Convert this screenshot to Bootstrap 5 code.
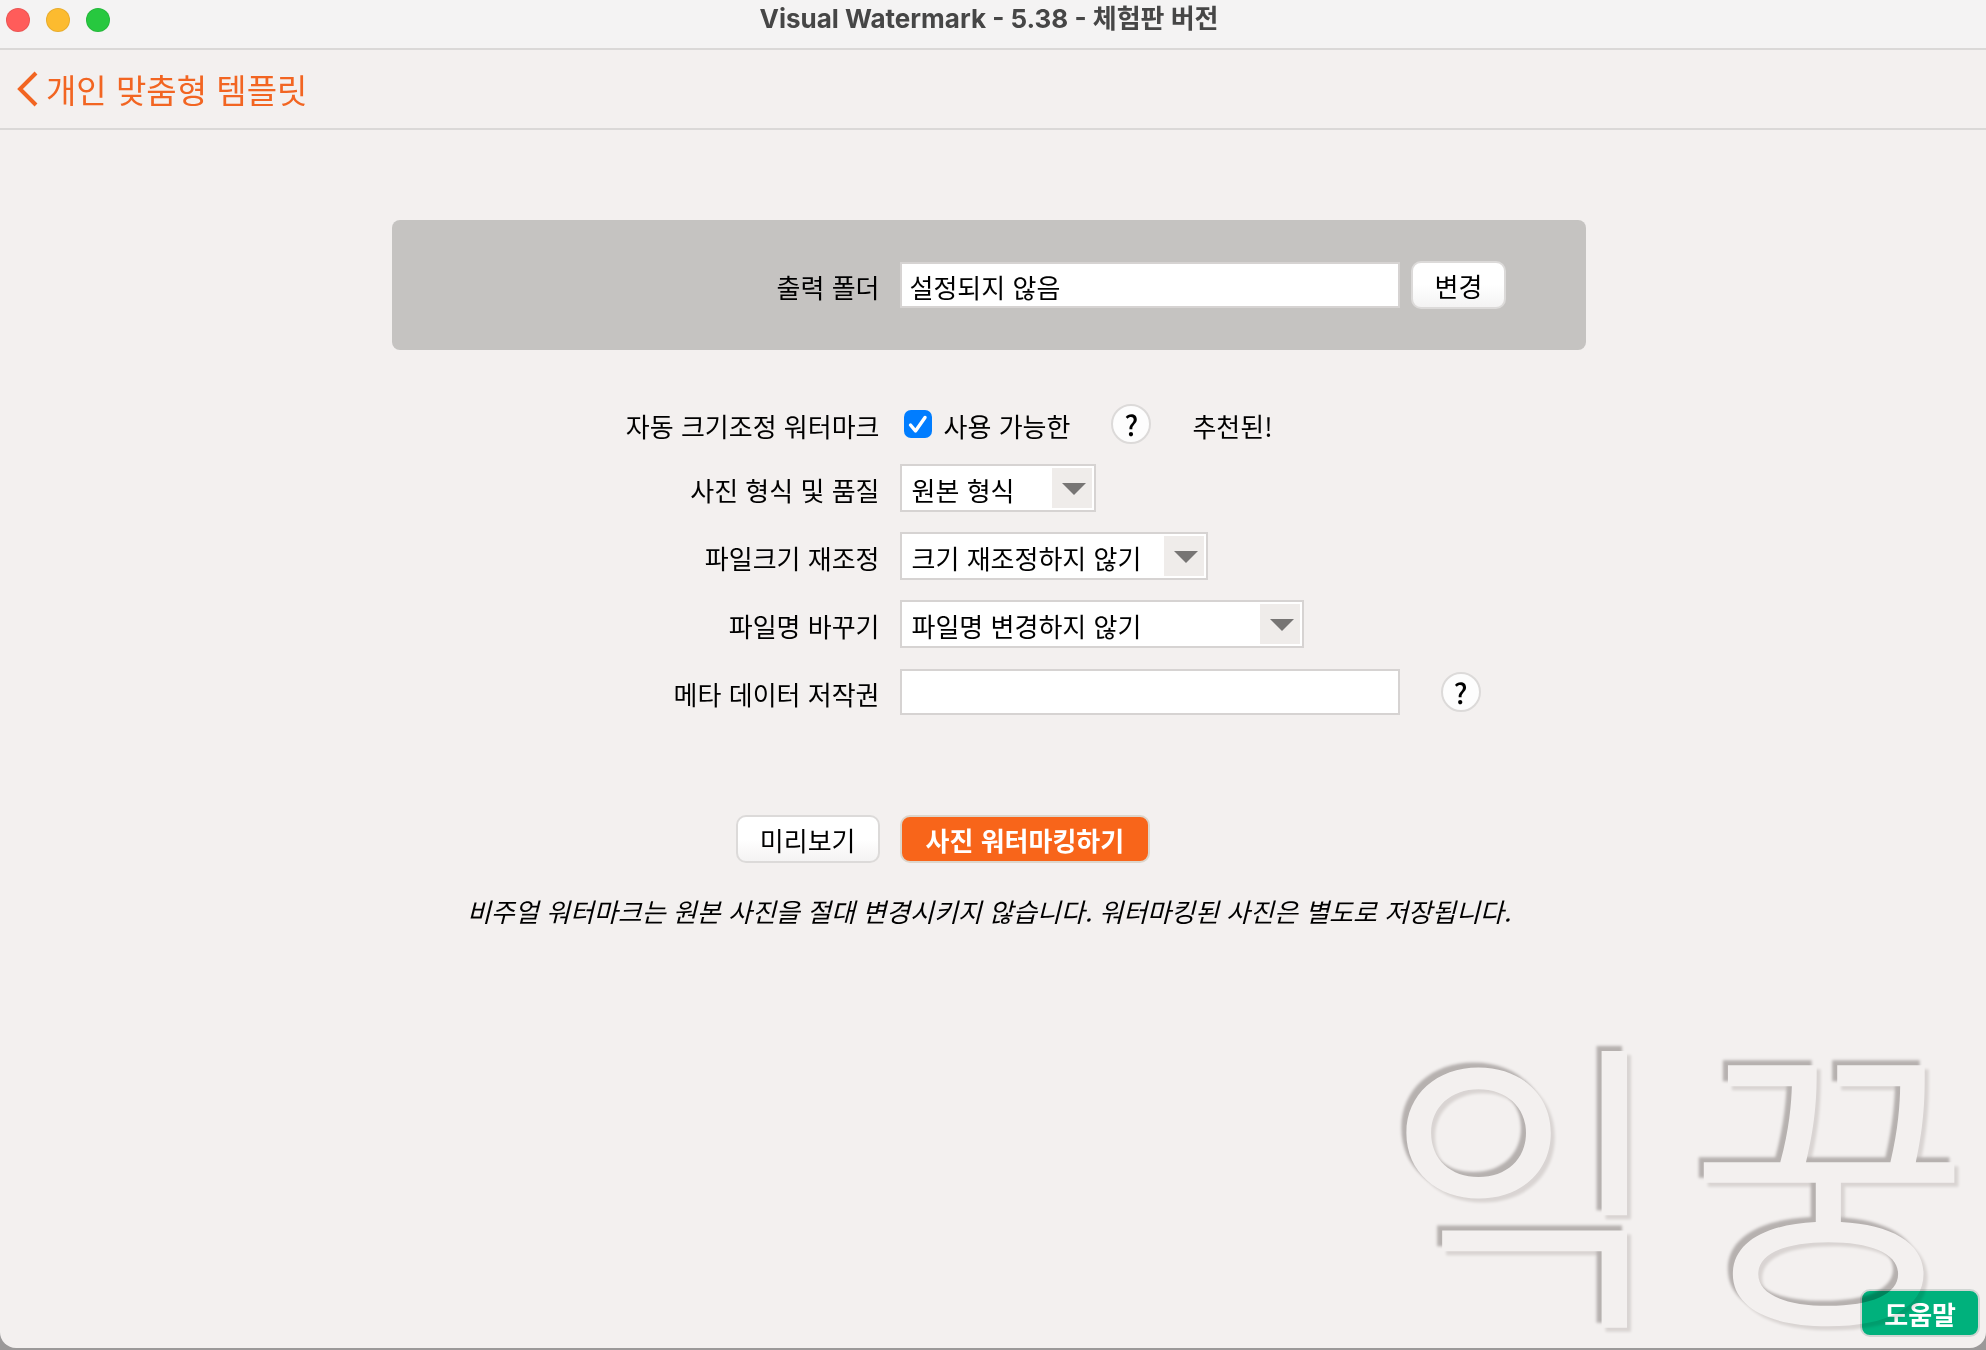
<!DOCTYPE html>
<html lang="ko">
<head>
<meta charset="utf-8">
<meta name="viewport" content="width=device-width, initial-scale=1">
<title>Visual Watermark - 5.38 - 체험판 버전</title>
<link href="https://cdn.jsdelivr.net/npm/bootstrap@5.3.0/dist/css/bootstrap.min.css" rel="stylesheet">
<style>
  body { background: #9b9999; color: #000; font-family: "Noto Sans CJK KR", sans-serif; font-size: 26px; line-height: 40px; }
  .app-window { min-height: calc(100vh - 2px); background: #f3f0ef; border-radius: 0 0 16px 16px; }
  .title-bar { height: 50px; background: #f4f3f3; border-bottom: 2px solid #dad8d7; padding: 0 6px; }
  .title-text { font: 700 26px/38px Inter, "Noto Sans CJK KR", sans-serif; color: #464646; margin: 0; padding-right: 8px; }
  .light { width: 24px; height: 24px; border-radius: 50%; border: 1px solid rgba(0,0,0,.08); }
  .light-close { background: #ff5c5a; }
  .light-min { background: #fcbb2f; }
  .light-zoom { background: #27c83f; }
  .nav-strip { height: 80px; border-bottom: 2px solid #dad8d7; padding: 0 16px; }
  .back-link { color: #f26522; font-size: 33px; line-height: 48px; text-decoration: none; gap: 8px; }
  .back-link:hover { color: #c94c10; }
  .form-area { width: 100%; max-width: 1202px; padding-right: 8px; margin: 90px auto 0; }
  .form-line { display: grid; grid-template-columns: calc(41% - 2px) 1fr; column-gap: 20px; align-items: center; height: 48px; }
  .form-line > :first-child { text-align: right; justify-self: end; }
  .form-line label, .form-line span { padding-top: 4px; line-height: 36px; }
  .folder-panel { background: #c5c3c1; border-radius: 8px; padding: 41px 0; }
  .option-list { gap: 20px; margin-top: 54px; }
  .line-short { height: 40px; }
  .panel-gap { gap: 11px; }
  .wide-gap { gap: 41px; }
  .form-control.field { width: 500px; height: 46px; border: 2px solid #d6d3d2; border-radius: 0; padding: 3px 8px 0; font-size: 26px; line-height: 38px; color: #000; background: #fff; }
  .form-select.picker { height: 48px; border: 2px solid #d6d3d2; border-radius: 0; padding: 3px 48px 0 10px; font-size: 26px; line-height: 40px; color: #000;
    background: #fff url("data:image/svg+xml,%3Csvg xmlns='http://www.w3.org/2000/svg' width='40' height='40'%3E%3Cpath fill='%23efecea' d='M0 0h40v40H0z'/%3E%3Cpath fill='%23777574' d='M10 15h24L22 27z'/%3E%3C/svg%3E") no-repeat right 2px center / 40px 40px; }
  .w-format { width: 196px; }
  .w-resize { width: 308px; }
  .w-rename { width: 404px; }
  .push-btn { height: 48px; border: 2px solid #dcdad9; border-radius: 10px; padding: 2px 22px 0; font-size: 26px; line-height: 42px; color: #000; background: linear-gradient(#fff 50%, #f4f3f3); }
  .push-main { font-weight: 700; color: #fff; background: #f8651a; border-color: #dcd6cc; padding: 2px 24px 0; }
  .push-help { font-weight: 700; color: #fff; background: #00b17c; border-color: #d0d6d3; }
  .form-check-input.tick { width: 28px; height: 28px; margin: 0; border-radius: 7px; border: 0; }
  .form-check-input.tick:checked { background-color: #007dff; background-size: 28px 28px;
    background-image: url("data:image/svg+xml,%3Csvg xmlns='http://www.w3.org/2000/svg' viewBox='0 0 28 28'%3E%3Cpath fill='none' stroke='white' stroke-width='3.4' stroke-linecap='round' stroke-linejoin='round' d='M6.500 15l5 6L21 7.500'/%3E%3C/svg%3E"); }
  .round-btn { width: 40px; height: 40px; border-radius: 50%; border: 2px solid #dcdad9; background: #fdfdfd; padding: 0; color: #000; font: 500 28px/34px "Noto Sans CJK KR", sans-serif; }
  .action-line { margin-top: 99px; }
  .note { font-style: italic; margin: 28px 0 0; text-align: center; }
  .help-spot { position: absolute; right: 6px; bottom: 11px; }
  /* Embossed mark: white multiplies away, only the two shadows remain */
  .emboss { position: absolute; right: 16px; bottom: 0; display: flex; gap: 22px; font-size: 306px; line-height: 354px; white-space: nowrap; color: #fff;
    text-shadow: -5px -5px 3px #bfbcbb, 4px 4px 3px #e4e2e1; mix-blend-mode: multiply; pointer-events: none; }
</style>
<script src="https://cdn.jsdelivr.net/npm/bootstrap@5.3.0/dist/js/bootstrap.bundle.min.js"></script>
</head>
<body>
<div class="app-window position-relative">
  <header class="title-bar d-flex position-relative">
    <div class="d-flex gap-3 pt-2 position-absolute">
      <span class="light light-close"></span>
      <span class="light light-min"></span>
      <span class="light light-zoom"></span>
    </div>
    <h1 class="title-text flex-grow-1 text-center">Visual Watermark - 5.38 - 체험판 버전</h1>
  </header>
  <nav class="nav-strip d-flex align-items-center">
    <a href="#" class="back-link d-flex align-items-center">
      <svg width="22" height="36" viewBox="0 0 22 36" fill="none" stroke="currentColor" stroke-width="4" aria-hidden="true"><path d="M20 2 4 18l16 16"/></svg>
      개인 맞춤형 템플릿
    </a>
  </nav>
  <main>
    <form class="form-area">
      <div class="folder-panel">
        <div class="form-line">
          <label for="folder">출력 폴더</label>
          <div class="d-flex align-items-center panel-gap">
            <input id="folder" class="form-control field" type="text" value="설정되지 않음">
            <button type="button" class="push-btn">변경</button>
          </div>
        </div>
      </div>
      <div class="option-list d-flex flex-column">
        <div class="form-line line-short">
          <span>자동 크기조정 워터마크</span>
          <div class="d-flex align-items-center wide-gap">
            <div class="d-flex align-items-center">
              <input id="autosize" class="form-check-input tick ms-1" type="checkbox" checked>
              <label for="autosize" class="ms-2 ps-1">사용 가능한</label>
            </div>
            <button type="button" class="round-btn">?</button>
            <span>추천된!</span>
          </div>
        </div>
        <div class="form-line">
          <label for="format">사진 형식 및 품질</label>
          <select id="format" class="form-select picker w-format"><option>원본 형식</option></select>
        </div>
        <div class="form-line">
          <label for="resize">파일크기 재조정</label>
          <select id="resize" class="form-select picker w-resize"><option>크기 재조정하지 않기</option></select>
        </div>
        <div class="form-line">
          <label for="rename">파일명 바꾸기</label>
          <select id="rename" class="form-select picker w-rename"><option>파일명 변경하지 않기</option></select>
        </div>
        <div class="form-line">
          <label for="meta">메타 데이터 저작권</label>
          <div class="d-flex align-items-center wide-gap">
            <input id="meta" class="form-control field" type="text">
            <button type="button" class="round-btn">?</button>
          </div>
        </div>
      </div>
      <div class="form-line action-line">
        <button type="button" class="push-btn">미리보기</button>
        <div><button type="submit" class="push-btn push-main">사진 워터마킹하기</button></div>
      </div>
      <p class="note">비주얼 워터마크는 원본 사진을 절대 변경시키지 않습니다. 워터마킹된 사진은 별도로 저장됩니다.</p>
    </form>
  </main>
  <button type="button" class="push-btn push-help help-spot">도움말</button>
  <div class="emboss" aria-hidden="true"><span>익</span><span>꿍</span></div>
</div>
</body>
</html>
